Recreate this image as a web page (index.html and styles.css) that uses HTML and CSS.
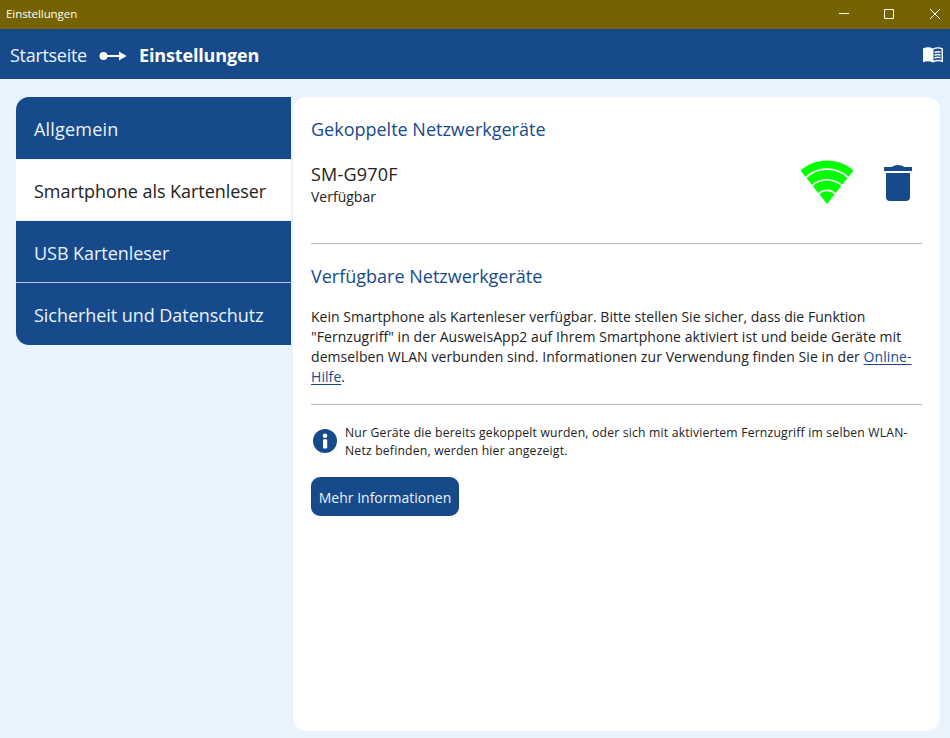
FILE: index.html
```html
<!DOCTYPE html>
<html lang="de">
<head>
    <meta charset="UTF-8">
    <meta name="viewport" content="width=device-width, initial-scale=1.0">
    <title>Einstellungen</title>
    <link rel="stylesheet" href="styles.css">
</head>
<body>

<div class="titlebar">
    <span class="window-title">Einstellungen</span>
    <div class="window-buttons">
        <svg width="12" height="12" viewBox="0 0 12 12"><path d="M2 5.500h10"/></svg>
        <svg width="12" height="12" viewBox="0 0 12 12"><path d="M1.500 1.500h9v9h-9z"/></svg>
        <svg width="12" height="12" viewBox="0 0 12 12"><path d="M1 1l10 10M11 1L1 11"/></svg>
    </div>
</div>

<header>
    <a class="crumb" href="#">Startseite</a>
    <svg class="crumb-arrow" width="28" height="12" viewBox="0 0 28 12">
        <circle cx="4.500" cy="6" r="4"/>
        <path d="M4 5h16V1.500l7.500 4.500-7.500 4.500V7H4z"/>
    </svg>
    <span class="crumb-current">Einstellungen</span>
    <svg class="manual-icon" width="22" height="18" viewBox="0 0 22 18">
        <path class="book" d="M1 2.500C4 .7 8 .7 11 2.500 14 .7 18 .7 21 2.500V16.300C18 15 14 15 11 16.600 8 15 4 15 1 16.300z"/>
        <path class="lines" d="M11.500 3.500C14 2.200 17 2.200 19.500 3.200V14.300C17 13.500 14 13.500 11.500 14.800z"/>
        <path class="rows" d="M12.500 6.400c2-.8 4-.8 6-.3M12.500 9.200c2-.8 4-.8 6-.3M12.500 12c2-.8 4-.8 6-.3"/>
    </svg>
</header>

<div class="content">
    <nav>
        <a href="#" class="wide">Allgemein</a>
        <a href="#" class="active">Smartphone als Kartenleser</a>
        <a href="#">USB Kartenleser</a>
        <a href="#">Sicherheit und Datenschutz</a>
    </nav>

    <main>
        <h2>Gekoppelte Netzwerkgeräte</h2>
        <div class="device">
            <div class="device-text">
                <div class="device-name">SM-G970F</div>
                <div class="device-status">Verfügbar</div>
            </div>
            <svg class="wifi-icon" width="54" height="44" viewBox="0 0 54 44">
                <path class="wifi" d="M27 44L.5 10.500C15-3 39-3 53.500 10.500z"/>
                <path class="gaps" d="M5 18.500C17 6 37 6 49 18.500M11 26.500C20 17.500 34 17.500 43 26.500M18 34.500C23 29 31 29 36 34.500"/>
            </svg>
            <svg class="trash-icon" width="28" height="36" viewBox="0 0 28 36">
                <path d="M0 2h7.500q3-2 6.500-2t6.500 2H28v4H0zM2 8h24v24q0 4-4 4H6q-4 0-4-4z"/>
            </svg>
        </div>

        <hr>

        <h2>Verfügbare Netzwerkgeräte</h2>
        <p class="description">
            <span class="row1">Kein Smartphone als Kartenleser verfügbar. Bitte stellen Sie sicher, dass die Funktion</span><br>
            "Fernzugriff" in der AusweisApp2 auf Ihrem Smartphone aktiviert ist und beide Geräte mit<br>
            demselben WLAN verbunden sind. Informationen zur Verwendung finden Sie in der <a href="#">Online-</a><br>
            <a href="#">Hilfe</a>.
        </p>

        <hr>

        <div class="hint">
            <svg width="24" height="24" viewBox="0 0 24 24">
                <circle class="disc" cx="12" cy="12" r="12"/>
                <circle class="mark" cx="12" cy="6.800" r="2.300"/>
                <rect class="mark" x="10" y="10.300" width="4.200" height="9.200" rx="1"/>
            </svg>
            <p>Nur Geräte die bereits gekoppelt wurden, oder sich mit aktiviertem Fernzugriff im selben WLAN-<br>Netz befinden, werden hier angezeigt.</p>
        </div>

        <button>Mehr Informationen</button>
    </main>
</div>

</body>
</html>
```
FILE: styles.css
```css
* {
    box-sizing: border-box;
}
body {
    font-family: 'Open Sans', 'Noto Sans', sans-serif;
    margin: 0;
    height: 738px;
    display: flex;
    flex-direction: column;
    background-color: #e9f3fd;
    color: #222;
    white-space: nowrap;
    overflow: hidden;
}
svg {
    display: block;
    flex: none;
}
.titlebar {
    height: 29px;
    padding: 0 9px 2px 6px;
    display: flex;
    align-items: center;
    justify-content: space-between;
    background-color: #756200;
    color: white;
    font-size: 11.5px;
}
.window-title {
    letter-spacing: -0.07px;
}
.window-buttons {
    display: flex;
    gap: 34px;
}
.window-buttons svg {
    fill: none;
    stroke: white;
}
header {
    height: 50px;
    padding: 2px 6px 0 10px;
    display: flex;
    align-items: center;
    background-color: #174a8b;
    color: white;
    font-size: 18px;
}
.crumb {
    color: #e9f3fd;
    text-decoration: none;
    width: 89px;
    letter-spacing: -0.3px;
}
.crumb-arrow {
    margin-top: 1px;
    fill: white;
}
.crumb-current {
    margin-left: 12px;
    font-weight: bold;
    letter-spacing: -0.15px;
}
.manual-icon {
    margin-left: auto;
}
.manual-icon .book {
    fill: white;
}
.manual-icon .lines {
    fill: #174a8b;
}
.manual-icon .rows {
    fill: none;
    stroke: white;
    stroke-width: 1.5;
}
.content {
    flex: 1;
    display: flex;
    align-items: flex-start;
    gap: 2px;
    padding: 18px 10px 7px 16px;
}
nav {
    width: 275px;
    border-radius: 13px 0 0 13px;
    overflow: hidden;
}
nav a {
    display: flex;
    align-items: center;
    height: 62px;
    padding: 2px 18px 0;
    background-color: #174a8b;
    color: #e9f3fd;
    font-size: 18px;
    letter-spacing: -0.05px;
    text-decoration: none;
    border-bottom: 1px solid #b5cae2;
}
nav a:first-child {
    height: 63px;
    padding-top: 1px;
    border-color: #e9f3fd;
}
nav a.wide {
    letter-spacing: 0.2px;
}
nav a.active {
    height: 61px;
    background-color: white;
    color: #222;
    border-color: #e9f3fd;
}
nav a:last-child {
    border-bottom: none;
}
main {
    flex: 1;
    align-self: stretch;
    padding: 18px;
    background-color: white;
    border-radius: 13px;
}
h2 {
    margin: 0;
    font-size: 18px;
    line-height: 28px;
    font-weight: normal;
    color: #174a8b;
}
.device {
    display: flex;
    align-items: flex-start;
    height: 100px;
    padding: 17px 10px 0 0;
}
.device-text {
    flex: 1;
    padding-top: 2px;
}
.device-name {
    font-size: 18px;
    line-height: 24px;
    letter-spacing: 0.2px;
}
.device-status {
    margin-top: 1px;
    font-size: 14px;
    line-height: 20px;
}
.trash-icon {
    margin: 5px 0 0 30px;
    fill: #174a8b;
}
.wifi {
    fill: #00ff00;
}
.gaps {
    fill: none;
    stroke: white;
    stroke-width: 1.7;
}
hr {
    margin: 0;
    border: none;
    border-top: 1px solid #b8b8b8;
}
hr + h2 {
    margin-top: 18px;
}
.description {
    margin: 17px 0;
    font-size: 14px;
    line-height: 20px;
    letter-spacing: 0.07px;
}
.description .row1 {
    letter-spacing: 0.025px;
}
.description a {
    color: #174a8b;
    text-underline-offset: 2px;
}
.hint {
    display: flex;
    align-items: flex-start;
    gap: 8px;
    margin: 19px 0 17px;
    padding-left: 2px;
}
.hint svg {
    margin-top: 5px;
}
.hint p {
    margin: 0;
    font-size: 12.2px;
    line-height: 18px;
    letter-spacing: 0.19px;
}
.disc {
    fill: #174a8b;
}
.mark {
    fill: white;
}
button {
    width: 148px;
    height: 39px;
    padding: 2px 0 0;
    background-color: #174a8b;
    color: #e9f3fd;
    border: none;
    border-radius: 9px;
    font-family: inherit;
    font-size: 14px;
}
```
